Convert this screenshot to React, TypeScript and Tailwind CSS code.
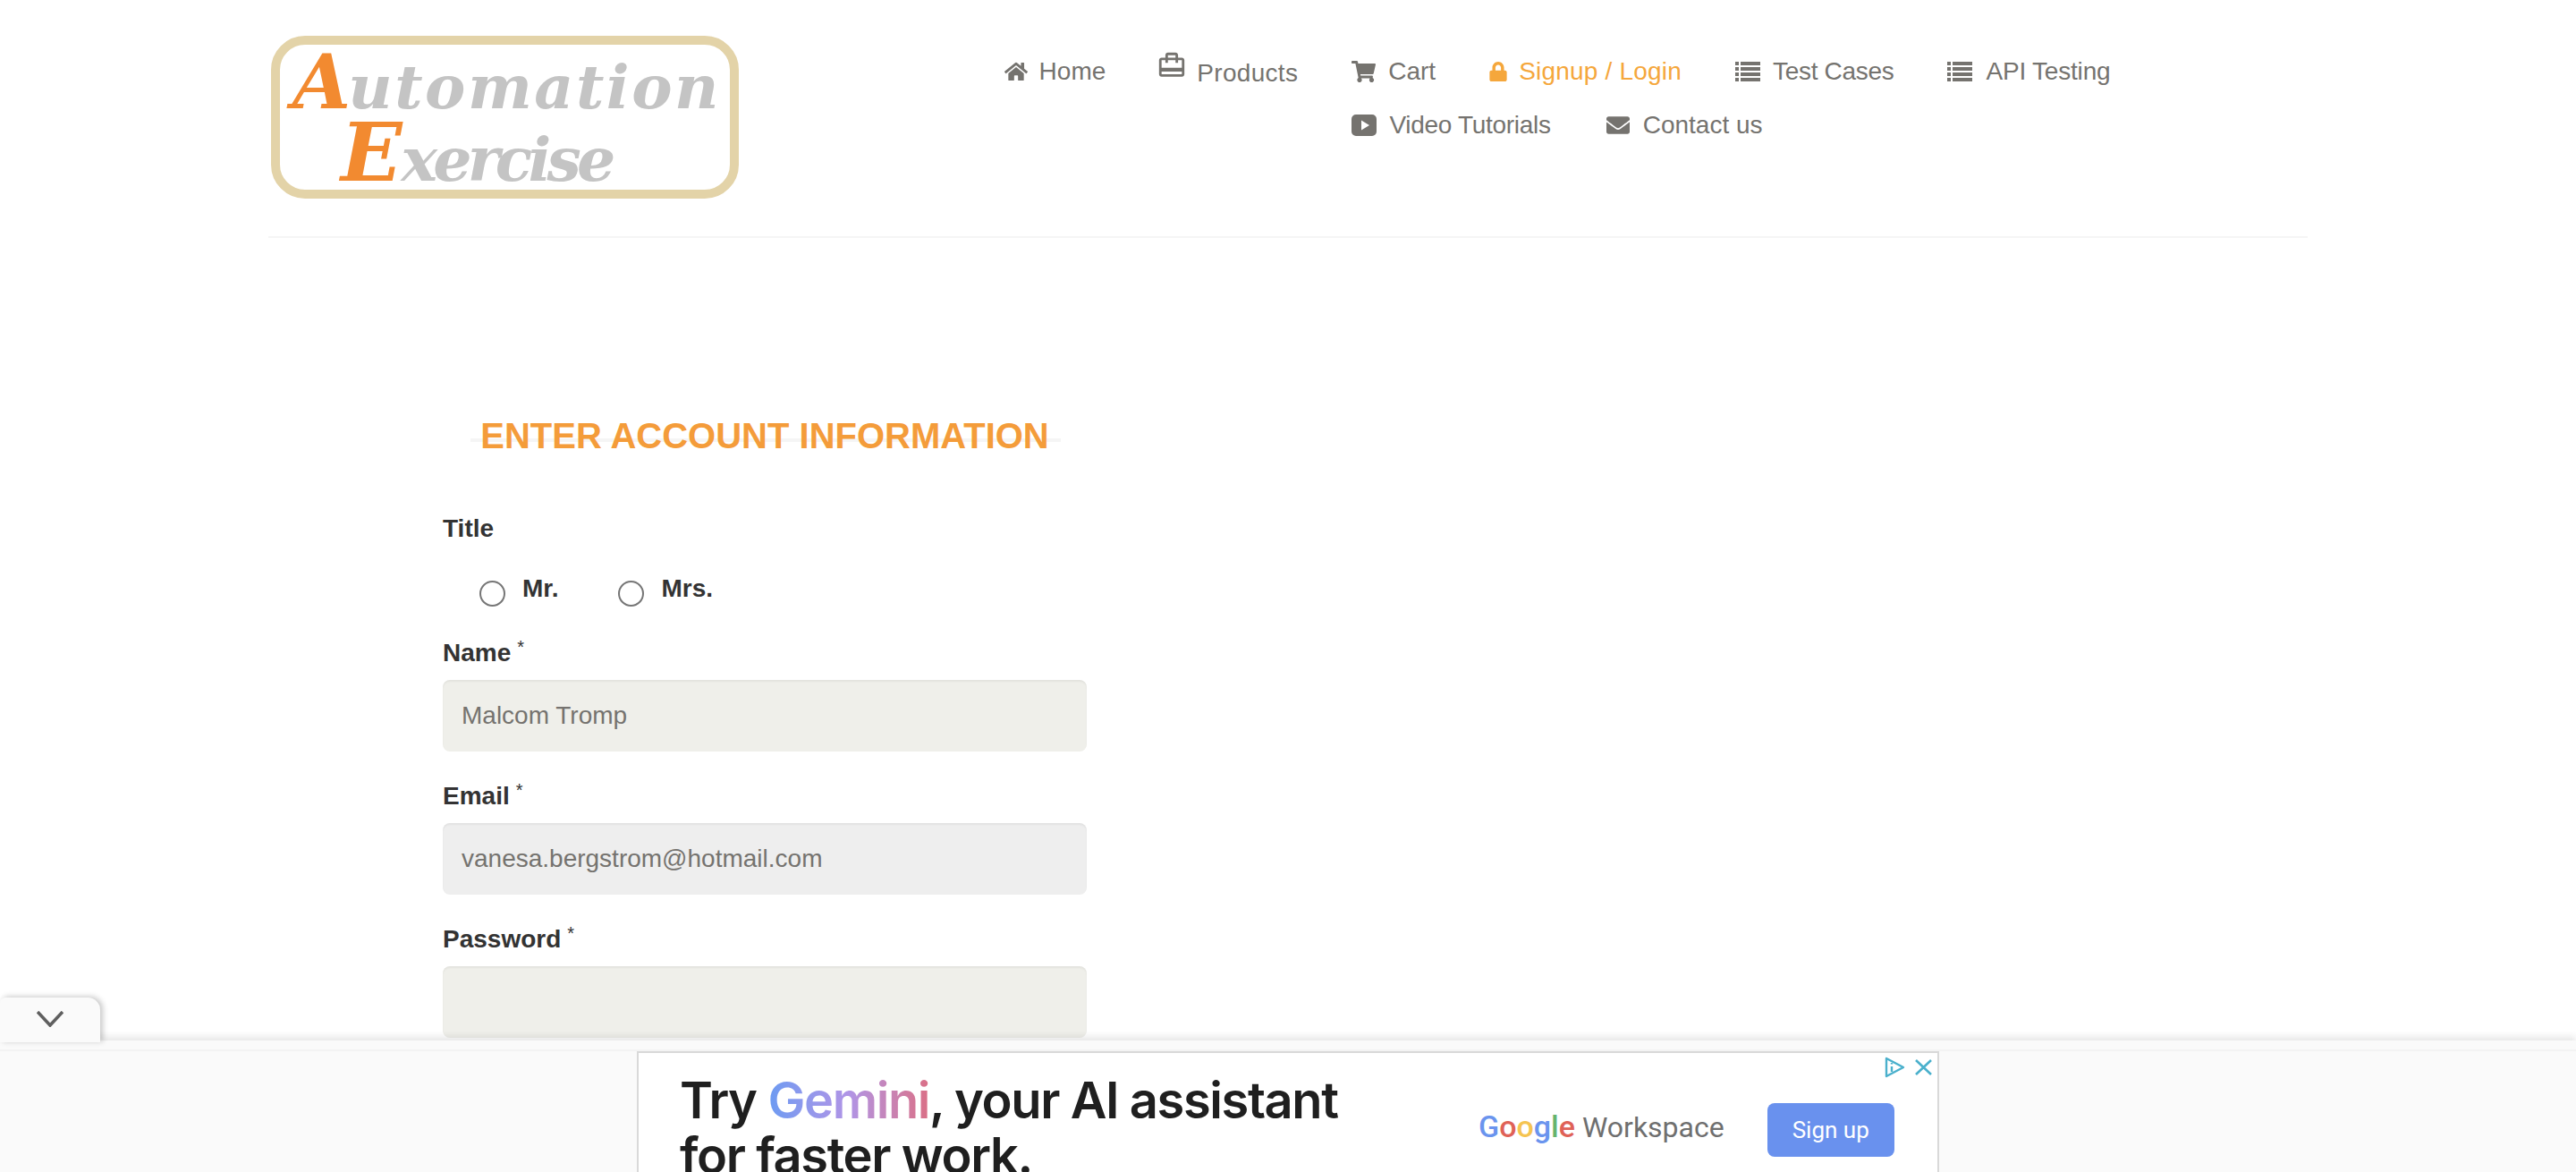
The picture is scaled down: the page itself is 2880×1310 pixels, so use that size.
import React from "react"
import { FaHome, FaShoppingCart, FaLock, FaEnvelope } from "react-icons/fa"
import { MdOutlineCardTravel } from "react-icons/md"

const sans = "font-['Liberation_Sans',Arial,sans-serif]"

function PlayIcon({ className }: { className?: string }) {
  return (
    <svg viewBox="0 0 28 24" className={className} fill="currentColor">
      <path fillRule="evenodd" d="M5 0h18a5 5 0 0 1 5 5v14a5 5 0 0 1-5 5H5a5 5 0 0 1-5-5V5a5 5 0 0 1 5-5zm6 6.5v11l9-5.5z" />
    </svg>
  )
}

function ListIcon() {
  return (
    <svg viewBox="0 0 28 24" className="w-[28px] h-[24px]" fill="currentColor">
      <path d="M0 1h4v4H0zM6 1h22v4H6zM0 7h4v4H0zM6 7h22v4H6zM0 13h4v4H0zM6 13h22v4H6zM0 19h4v4H0zM6 19h22v4H6z" />
    </svg>
  )
}

const firstRow: NavEntry[] = [
  { label: "Home", icon: <FaHome className="w-[26px] h-[24px]" />, gap: "gap-[13px]" },
  { label: "Products", icon: <MdOutlineCardTravel className="w-[34px] h-[34px] -mx-[3px] -mt-[14px]" />, gap: "gap-[14px]", text: "mt-[3px] tracking-[0.3px]" },
  { label: "Cart", icon: <FaShoppingCart className="w-[27px] h-[24px]" />, gap: "gap-[14px]" },
  { label: "Signup / Login", icon: <FaLock className="w-[20px] h-[22px]" />, gap: "gap-[13px]", active: true, text: "tracking-[0.2px]" },
  { label: "Test Cases", icon: <ListIcon />, gap: "gap-[14px]", text: "tracking-[-0.3px]" },
  { label: "API Testing", icon: <ListIcon />, gap: "gap-[15px]", text: "tracking-[-0.2px]" },
]

const secondRow: NavEntry[] = [
  { label: "Video Tutorials", icon: <PlayIcon className="w-[28px] h-[24px]" />, gap: "gap-[14px]", text: "tracking-[-0.3px]" },
  { label: "Contact us", icon: <FaEnvelope className="w-[30px] h-[26px]" />, gap: "gap-[13px]" },
]

type NavEntry = { label: string; icon: React.ReactNode; gap: string; text?: string; active?: boolean }

function NavItem({ item }: { item: NavEntry }) {
  return (
    <a className={`flex items-center h-[60px] text-[28px] ${item.gap} ${item.active ? "text-[#f5a73c]" : "text-[#75736f]"}`}>
      {item.icon}
      <span className={item.text}>{item.label}</span>
    </a>
  )
}

function Logo() {
  return (
    <div className="w-[523px] h-[182px] mt-[40px] border-[10px] border-[#e3d3a8] rounded-[38px] font-['DejaVu_Serif',serif] italic font-bold text-[#c4c4c4]">
      <div className="pl-[14px] h-[84px] leading-[84px] text-[68px] tracking-[2.5px] whitespace-nowrap">
        <span className="text-[#f28a30] text-[84px] leading-[84px] tracking-[-3px]">A</span>utomation
      </div>
      <div className="pl-[68px] h-[73px] leading-[73px] text-[68px] tracking-[-4.8px] whitespace-nowrap">
        <span className="text-[#f28a30] text-[90px] leading-[73px] tracking-[-1px]">E</span>xercise
      </div>
    </div>
  )
}

function Field({ label, value, bg }: { label: string; value?: string; bg: string }) {
  return (
    <div className="mb-[30px]">
      <div className="h-[40px] mb-[10px] flex items-center font-bold text-[28px] text-[#333]">
        {label}
        <span className="ml-[7px] -mt-[14px] text-[20px] leading-none font-normal">*</span>
      </div>
      <div className={`h-[80px] px-[21px] flex items-center rounded-[8px] text-[28px] text-[#75736f] shadow-[inset_0_2px_2px_rgba(0,0,0,0.05)] ${bg}`}>
        {value}
      </div>
    </div>
  )
}

function Radio({ label }: { label: string }) {
  return (
    <div className="flex items-start">
      <span className="w-[29px] h-[29px] mt-[7px] rounded-full border-2 border-[#767676] bg-white" />
      <span className="ml-[19px] font-bold text-[28px] leading-[32px] text-[#333]">{label}</span>
    </div>
  )
}

function AdBar() {
  return (
    <div className="fixed left-0 right-0 bottom-0 h-[147px] bg-[#fafafa] shadow-[0_-4px_8px_rgba(0,0,0,0.1)]">
      {/* collapse tab */}
      <div className="absolute left-0 -top-[48px] w-[112px] h-[50px] bg-[#fafafa] rounded-tl-[6px] rounded-tr-[14px] shadow-[3px_-1px_6px_rgba(0,0,0,0.22)] flex items-center justify-center">
        <svg viewBox="0 0 30 18" className="w-[30px] h-[18px] -mt-[3px]" fill="none" stroke="#5f5f5f" strokeWidth="3.6">
          <path d="M1 1l14 15L29 1" />
        </svg>
      </div>
      <div className="absolute left-0 right-0 top-[10px] h-[2px] bg-[#f3f3f3]" />
      <div className="relative mx-auto w-[1456px] h-[135px] mt-[12px] bg-white border-l-2 border-r-2 border-t-2 border-[#d9d9d9] overflow-hidden">
        <div className="absolute right-[6px] top-[4px] flex items-center gap-[11px]">
          <svg viewBox="0 0 23 24" className="w-[23px] h-[24px]" fill="none" stroke="#4ab0cc" strokeWidth="2.4">
            <path d="M2 2l19 10L2 22z" strokeLinejoin="round" />
            <path d="M8 11v6M8 7v1.5" />
          </svg>
          <svg viewBox="0 0 19 18" className="w-[19px] h-[18px]" fill="none" stroke="#4ab0cc" strokeWidth="2.6">
            <path d="M1 1l17 16M18 1L1 17" />
          </svg>
        </div>
        <div className="flex items-start">
          <div className="ml-[46px] mt-[22px] w-[800px] h-[124px] font-['Inter',sans-serif] font-semibold text-[56px] leading-[62px] tracking-[-1.4px] text-[#1f1f1f] whitespace-nowrap">
            Try{" "}
            <span className="bg-gradient-to-r from-[#6b9bf2] via-[#b094e6] to-[#da6f86] bg-clip-text text-transparent">Gemini</span>
            , your AI assistant
            <br />
            for faster work.
          </div>
          <div className="ml-[93px] mt-[60px] font-['Roboto',sans-serif] text-[32px] leading-[44px] whitespace-nowrap text-[#6f6f6f]">
            <span className="font-medium text-[34px]">
              <span className="text-[#6a94ee]">G</span>
              <span className="text-[#df6257]">o</span>
              <span className="text-[#f5c451]">o</span>
              <span className="text-[#6a94ee]">g</span>
              <span className="text-[#66b46f]">l</span>
              <span className="text-[#df6257]">e</span>
            </span>{" "}
            Workspace
          </div>
          <div className="ml-[48px] mt-[56px] w-[142px] h-[60px] rounded-[8px] bg-[#6991ee] text-white flex items-center justify-center font-['Roboto',sans-serif] text-[26px]">
            Sign up
          </div>
        </div>
      </div>
    </div>
  )
}

export default function App() {
  return (
    <div className={`h-screen overflow-hidden bg-white ${sans}`}>
      <header className="mx-[300px] h-[266px] border-b-2 border-[#f5f5f5] flex items-start">
        <div className="ml-[3px]">
          <Logo />
        </div>
        <nav className="ml-[260px] mt-[50px] w-[1310px]">
          <div className="flex justify-center gap-x-[60px]">
            {firstRow.map((item) => (
              <NavItem key={item.label} item={item} />
            ))}
          </div>
          <div className="flex justify-center gap-x-[60px]">
            {secondRow.map((item) => (
              <NavItem key={item.label} item={item} />
            ))}
          </div>
        </nav>
      </header>

      <main className="ml-[495px] w-[720px] pt-[196px]">
        <div className="relative flex justify-center">
          <div className="absolute left-[31px] right-[29px] top-[28px] h-[4px] bg-[#f5f5f5]" />
          <h2 className="relative font-bold text-[40px] leading-[50px] text-[#f49c3a]">ENTER ACCOUNT INFORMATION</h2>
        </div>

        <div className="mt-[59px] h-[40px] flex items-center font-bold text-[28px] text-[#333]">Title</div>
        <div className="mt-[31px] ml-[41px] h-[48px] flex gap-[67px]">
          <Radio label="Mr." />
          <Radio label="Mrs." />
        </div>
        <div className="mt-[20px]">
          <Field label="Name" value="Malcom Tromp" bg="bg-[#efefea]" />
          <Field label="Email" value="vanesa.bergstrom@hotmail.com" bg="bg-[#eeeeee]" />
          <Field label="Password" bg="bg-[#efefea]" />
        </div>
      </main>

      <AdBar />
    </div>
  )
}
